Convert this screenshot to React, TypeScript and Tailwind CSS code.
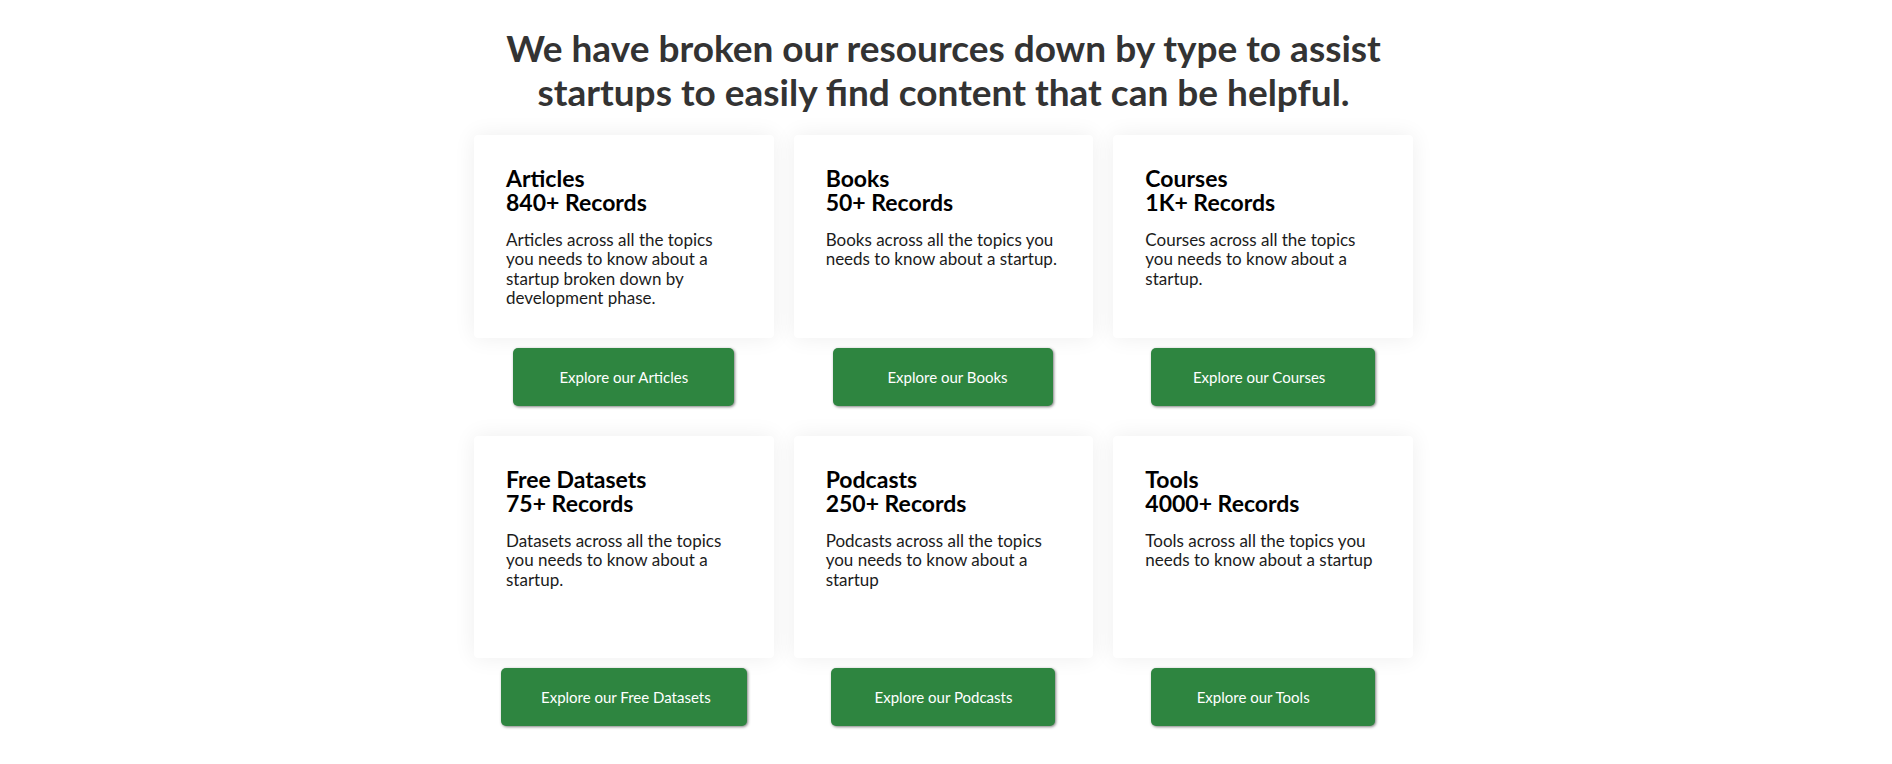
import React from "react";

type Item = {
  title: string;
  records: string;
  lines: string[];
  button: string;
  btnW: string;
};

const row1: Item[] = [
  {
    title: "Articles",
    records: "840+ Records",
    lines: ["Articles across all the topics", "you needs to know about a", "startup broken down by", "development phase."],
    button: "Explore our Articles",
    btnW: "w-[221px]",
  },
  {
    title: "Books",
    records: "50+ Records",
    lines: ["Books across all the topics you", "needs to know about a startup."],
    button: "Explore our Books",
    btnW: "w-[220px] pl-[8px]",
  },
  {
    title: "Courses",
    records: "1K+ Records",
    lines: ["Courses across all the topics", "you needs to know about a", "startup."],
    button: "Explore our Courses",
    btnW: "w-[224px] pr-[8px]",
  },
];

const row2: Item[] = [
  {
    title: "Free Datasets",
    records: "75+ Records",
    lines: ["Datasets across all the topics", "you needs to know about a", "startup."],
    button: "Explore our Free Datasets",
    btnW: "w-[246px] pl-[4px]",
  },
  {
    title: "Podcasts",
    records: "250+ Records",
    lines: ["Podcasts across all the topics", "you needs to know about a", "startup"],
    button: "Explore our Podcasts",
    btnW: "w-[224px]",
  },
  {
    title: "Tools",
    records: "4000+ Records",
    lines: ["Tools across all the topics you", "needs to know about a startup"],
    button: "Explore our Tools",
    btnW: "w-[224px] pr-[20px]",
  },
];

function Card({ item, tall }: { item: Item; tall: boolean }) {
  return (
    <div className="flex flex-col items-center">
      <div
        className={`w-full ${tall ? "h-[222px]" : "h-[203px]"} rounded-[4px] bg-white px-[32px] pt-[32px] shadow-[0_0_22px_rgba(0,0,0,0.07)]`}
      >
        <h3 className="text-[23px] leading-[23.5px] font-bold text-black">
          <span className="block">{item.title}</span>
          <span className="block">{item.records}</span>
        </h3>
        <p className="mt-[16px] text-[17px] leading-[19.3px] text-[#1b1b1b]">
          {item.lines.map((l, i) => (
            <span key={i} className="block">
              {l}
            </span>
          ))}
        </p>
      </div>
      <button
        className={`mt-[10px] h-[58px] ${item.btnW} rounded-[5px] bg-[#2e8540] text-[15px] text-white shadow-[1px_1px_3px_rgba(0,0,0,0.5)]`}
      >
        {item.button}
      </button>
    </div>
  );
}

export default function App() {
  return (
    <div className="min-h-[764px] w-full bg-white font-['Lato',sans-serif]">
      <div className="flex justify-center">
        <div className="w-[939px] mr-[5px] pt-[26px]">
          <h2 className="text-center text-[37px] leading-[44px] font-bold text-[#333333]">
            <span className="block">We have broken our resources down by type to assist</span>
            <span className="block">startups to easily find content that can be helpful.</span>
          </h2>
          <div className="mt-[21px] grid grid-cols-3 gap-x-[20px]">
            {row1.map((it) => (
              <Card key={it.title} item={it} tall={false} />
            ))}
          </div>
          <div className="mt-[30px] grid grid-cols-3 gap-x-[20px]">
            {row2.map((it) => (
              <Card key={it.title} item={it} tall={true} />
            ))}
          </div>
        </div>
      </div>
    </div>
  );
}
